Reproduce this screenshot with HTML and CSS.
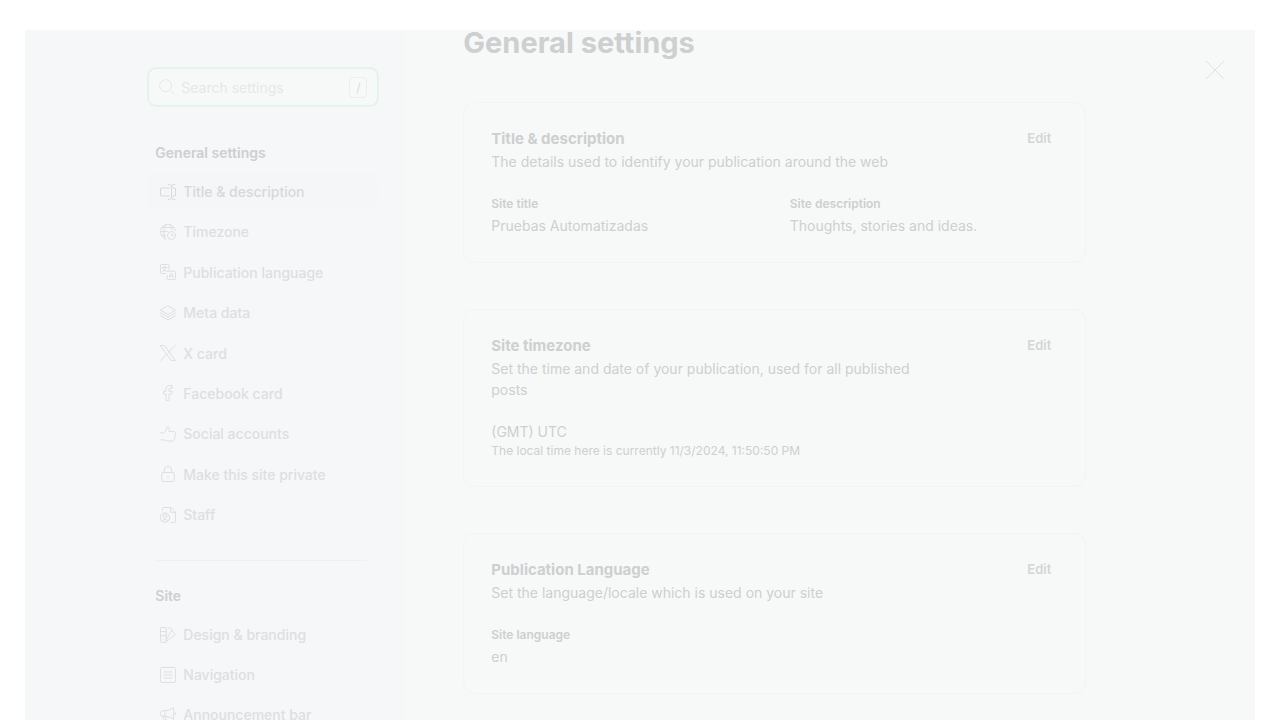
FILE: index.html
```html
<!DOCTYPE html>
<html lang="en">
<head>
<meta charset="utf-8">
<title>Settings</title>
<link rel="stylesheet" href="styles.css">
</head>
<body>
<div class="modal">
  <aside class="sidebar">
    <div class="sidebar-inner">
      <label class="search">
        <svg class="icon" viewBox="0 0 24 24"><circle cx="10" cy="10" r="9"/><path d="M16.5 16.5 23 23"/></svg>
        <input type="text" placeholder="Search settings" aria-label="Search settings">
        <kbd>/</kbd>
      </label>
      <h2 class="nav-title">General settings</h2>
      <nav class="nav nav-general" aria-label="General settings">
        <a class="nav-item active" href="#title"><svg class="icon" viewBox="0 0 24 24"><path d="M14 6H2Q.75 6 .75 7.25v9.5Q.75 18 2 18h12M20 6h2q1.25 0 1.25 1.25v9.5Q23.250 18 22 18h-2M17.500 3.500v17M12.750.75c3 0 4.750.8 4.750 2.800 0-2 1.750-2.800 4.750-2.800M12.750 23.250c3 0 4.750-.8 4.750-2.800 0 2 1.750 2.800 4.750 2.800"/></svg>Title &amp; description</a>
        <a class="nav-item" href="#timezone"><svg class="icon" viewBox="0 0 24 24"><circle cx="17.250" cy="17.250" r="6"/><path d="M19.900 17.250h-2.650V14.600M8.500 22.300A11.250 11.250 0 1 1 23.100 9.700M8.300 22C6.800 19.700 5.800 16 5.800 12S6.800 4.300 8.300 2M.8 11.250h10M3 5.250h18M2 17.250h6.500M15.600 2c1.200 2 2 4.200 2.300 6.600"/></svg>Timezone</a>
        <a class="nav-item" href="#language"><svg class="icon" viewBox="0 0 24 24"><path d="M8.250 14.250H2A1.300 1.300 0 0 1 .75 13V2A1.300 1.300 0 0 1 2 .75h10A1.300 1.300 0 0 1 13.250 2v6M11 10.750h11A1.300 1.300 0 0 1 23.250 12v10A1.300 1.300 0 0 1 22 23.250H12A1.300 1.300 0 0 1 10.750 22v-5M14.750 20.250v-4a2.250 2.250 0 0 1 4.500 0v4M14.750 18h4.500M3.500 5.250h7M7 3v2.250M9 5.250c-.5 3-2.500 5-5 5.750M5 7.500c1 2 2.500 3 4.500 3.500"/></svg>Publication language</a>
        <a class="nav-item" href="#metadata"><svg class="icon" viewBox="0 0 24 24"><path d="m12 1.500 11.200 6.200L12 14 .8 7.700ZM.8 12 12 18.200 23.200 12M.8 16.300 12 22.500l11.200-6.200"/></svg>Meta data</a>
        <a class="nav-item" href="#xcard"><svg class="icon" viewBox="0 0 24 24"><path d="M.8.8h5.800l16.600 22.400h-5.800ZM22.500.8l-9.600 10.300M10.600 13.400 1.200 23.200"/></svg>X card</a>
        <a class="nav-item" href="#facebook"><svg class="icon" viewBox="0 0 24 24"><path d="M17.500.8h-3C11 .8 9 2.800 9 6v3.500H5.500v4.300H9v9.400h4.500v-9.400h3.700l.8-4.300h-4.500V6.400c0-.8.500-1.300 1.300-1.300h3.200V.8Z"/></svg>Facebook card</a>
        <a class="nav-item" href="#social"><svg class="icon" viewBox="0 0 24 24"><path d="M.8 10.500h2.700c3.500 0 6.500-3.500 6.500-7.700 0-2.700 4-2.700 4 .8 0 2.600-.7 4.700-.7 4.700h7.400c1.500 0 2.500 1 2.500 2.500 0 3.700-1.200 7.700-2.200 10-.6 1.300-1.800 2-3.200 2-5.300 0-9.500-1-12.300-2H.8"/></svg>Social accounts</a>
        <a class="nav-item" href="#private"><svg class="icon" viewBox="0 0 24 24"><rect x="2.500" y="9.800" width="19" height="13.500" rx="1.500"/><path d="M6.500 9.800V6a5.500 5.500 0 0 1 11 0v3.800M12 15v3"/></svg>Make this site private</a>
        <a class="nav-item" href="#staff"><svg class="icon" viewBox="0 0 24 24"><circle cx="7.500" cy="15.800" r="7"/><circle cx="7.500" cy="14" r="2.700"/><path d="M3 21c1-3 8-3 9 0M3.800 5.500V2A1.300 1.300 0 0 1 5 .75h11.500l6.750 6.750V22A1.300 1.300 0 0 1 22 23.250h-5M16 .8v7.200h7"/></svg>Staff</a>
      </nav>
      <hr class="divider">
      <h2 class="nav-title">Site</h2>
      <nav class="nav" aria-label="Site">
        <a class="nav-item" href="#design"><svg class="icon" viewBox="0 0 24 24"><path d="M2 .75h6A1.300 1.300 0 0 1 9.250 2v20A1.300 1.300 0 0 1 8 23.250H2A1.300 1.300 0 0 1 .75 22V2A1.300 1.300 0 0 1 2 .75ZM.8 6.800h8.400M.8 13h8.400M5 19v.8M12 1c2.500 0 4.700 1 6 2.500L9.200 20M18 5l5 6L8.500 22.800"/></svg>Design &amp; branding</a>
        <a class="nav-item" href="#navigation"><svg class="icon" viewBox="0 0 24 24"><rect x=".75" y=".75" width="22.500" height="22.500" rx="1.500"/><path d="M6 7.500h12M6 12h12M6 16.500h12"/></svg>Navigation</a>
        <a class="nav-item" href="#announcement"><svg class="icon" viewBox="0 0 24 24"><path d="M7 5.500H4.500a4.200 4.200 0 0 0 0 8.500H7ZM7 5.500C12 5.500 17 4 20.500 1v17.500C17 15.500 12 14 7 14M23.200 8.500v2.500M5 14c0 3 .8 6.300 2.500 8.500h3C9 20 8.500 17 8.500 14"/></svg>Announcement bar</a>
      </nav>
    </div>
  </aside>
  <main class="main">
    <button class="close" type="button" aria-label="Close"><svg viewBox="0 0 20 20"><path d="m1 1 18 18M19 1 1 19"/></svg></button>
    <div class="content">
      <h1>General settings</h1>
      <section class="card" id="title">
        <header><div class="intro"><h3>Title &amp; description</h3><p>The details used to identify your publication around the web</p></div><button class="edit" type="button">Edit</button></header>
        <dl class="fields">
          <div><dt>Site title</dt><dd>Pruebas Automatizadas</dd></div>
          <div><dt>Site description</dt><dd>Thoughts, stories and ideas.</dd></div>
        </dl>
      </section>
      <section class="card" id="timezone">
        <header><div class="intro"><h3>Site timezone</h3><p>Set the time and date of your publication, used for all published posts</p></div><button class="edit" type="button">Edit</button></header>
        <div class="zone"><p>(GMT) UTC</p><small>The local time here is currently 11/3/2024, 11:50:50 PM</small></div>
      </section>
      <section class="card" id="language">
        <header><div class="intro"><h3>Publication Language</h3><p>Set the language/locale which is used on your site</p></div><button class="edit" type="button">Edit</button></header>
        <dl class="fields">
          <div><dt>Site language</dt><dd>en</dd></div>
        </dl>
      </section>
    </div>
  </main>
</div>
</body>
</html>
```
FILE: styles.css
```css
* { box-sizing: border-box; margin: 0; padding: 0; }
html, body { height: 100%; }
body {
  background: #fff;
  color: #cdcfd0;
  font-family: Inter, "Liberation Sans", sans-serif;
  font-size: 14px;
  line-height: 21px;
  overflow: hidden;
}
button, input { font: inherit; color: inherit; border: 0; background: none; }
svg { display: block; fill: none; stroke: currentColor; stroke-linecap: round; stroke-linejoin: round; }
.modal { display: flex; height: 100%; padding: 30px 25px 0; }
.sidebar { flex: 0 0 31%; background: #f5f7f9; display: flex; justify-content: flex-end; padding: 38px 28px 0 16px; }
.sidebar-inner { width: 230px; }
.icon { width: 16px; height: 16px; flex: none; stroke-width: 1.5; }
.search {
  display: flex; align-items: center; gap: 6px; height: 38px; padding: 0 10px;
  border: 1px solid #e1f3e5; border-radius: 8px; background: #f7f9f8;
  box-shadow: 0 0 0 1px #e9f4ec; color: #e5e7e9;
}
.search input { flex: 1; min-width: 0; outline: 0; }
.search input::placeholder { color: #e5e7ea; opacity: 1; }
.search kbd { font: inherit; font-size: 12px; line-height: 19px; width: 18px; text-align: center; border: 1px solid #eceeef; border-radius: 4px; color: #d9dbdc; }
.nav-title { font-size: 14px; line-height: 20px; font-weight: 600; padding-left: 7px; margin: 37px 0 10px; }
.nav { display: flex; flex-direction: column; gap: 3px; }
.nav-general { min-height: 360px; justify-content: space-between; }
.nav-item {
  display: flex; align-items: center; gap: 7px; height: 37px; padding: 0 12px;
  border-radius: 6px; color: #dddfe1; font-weight: 500; text-decoration: none;
}
.nav-item.active { background: #f4f6f8; color: #d7d9db; }
.divider { border: 0; border-top: 1px solid #eff0f2; margin: 27px 11px 0 8px; }
.divider + .nav-title { margin-top: 25px; }
.main { flex: 1; min-width: 0; position: relative; background: #f7f9f8; padding: 0 57px; }
.close { position: absolute; top: 30px; right: 30px; width: 20px; height: 20px; color: #e0e2e5; }
.content { max-width: 623px; }
h1 { font-size: 29px; line-height: 26px; font-weight: 700; }
.card { margin-top: 46px; padding: 24px 27px 26px; border: 1px solid #f3f5f5; border-radius: 12px; }
.card header { display: flex; justify-content: space-between; align-items: flex-start; }
.intro { max-width: 430px; }
h3 { font-size: 15px; line-height: 24px; font-weight: 700; }
.edit { font-size: 13px; line-height: 23px; font-weight: 600; color: #d3d5d6; margin-right: 7px; }
.fields { display: grid; grid-template-columns: 1fr 1fr; gap: 30px; margin-top: 23px; }
dt { font-size: 12px; line-height: 18px; font-weight: 600; margin-bottom: 2px; }
.zone { margin-top: 22px; }
.zone p { line-height: 20px; }
small { display: block; font-size: 12px; line-height: 18px; }
```
